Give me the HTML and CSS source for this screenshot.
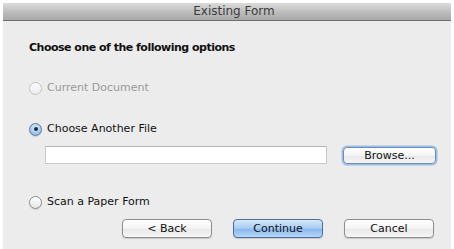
FILE: index.html
```html
<!DOCTYPE html>
<html lang="en">
<head>
  <meta charset="UTF-8">
  <title>Existing Form</title>
  <link rel="stylesheet" href="styles.css">
</head>
<body>
  <div class="dialog">
    <div class="titlebar">Existing Form</div>
    <div class="content">
      <div class="heading">Choose one of the following options</div>

      <label class="option disabled option-first">
        <span class="radio"></span>Current Document
      </label>

      <label class="option option-second">
        <span class="radio checked"></span>Choose Another File
      </label>

      <div class="filerow">
        <div class="filefield"></div>
        <button class="btn focus">Browse...</button>
      </div>

      <label class="option option-third">
        <span class="radio"></span>Scan a Paper Form
      </label>

      <div class="actions">
        <button class="btn">&lt; Back</button>
        <button class="btn primary">Continue</button>
        <button class="btn">Cancel</button>
      </div>
    </div>
  </div>
</body>
</html>
```

FILE: styles.css
```css
body {
  margin: 0;
  background: #fff;
  font-family: 'DejaVu Sans', sans-serif;
  font-size: 11px;
  color: #111;
}
.dialog {
  margin: 3px 3px 0 3px;
  height: 246px;
  background: #ececec;
}
.titlebar {
  height: 17px;
  line-height: 17px;
  text-align: center;
  font-size: 12px;
  color: #3c3c3c;
  background: linear-gradient(to bottom, #dcdcdc, #b9b9b9 60%, #a9a9a9);
  border-bottom: 1px solid #6f6f6f;
  padding-left: 14px;
}
.content {
  display: flex;
  flex-direction: column;
  padding: 0 0 0 26px;
}
.heading {
  margin-top: 20px;
  font-weight: bold;
  line-height: 14px;
  letter-spacing: -0.5px;
}
.option {
  display: flex;
  align-items: center;
  gap: 5px;
  height: 14px;
  line-height: 14px;
}
.option-first { margin-top: 26px; }
.option-second { margin-top: 27px; }
.option-third { margin-top: 31px; }
.option.disabled {
  color: #9a9a9a;
}
.radio {
  width: 11px;
  height: 11px;
  border: 1px solid #8c8c8c;
  border-radius: 50%;
  background: linear-gradient(to bottom, #ffffff, #e6e6e6);
  box-shadow: 0 1px 1px rgba(0,0,0,0.12);
  position: relative;
}
.option.disabled .radio {
  border-color: #c4c4c4;
  background: linear-gradient(to bottom, #fafafa, #eeeeee);
  box-shadow: none;
}
.radio.checked {
  border-color: #5a7aa6;
  background: radial-gradient(circle at 50% 35%, #e4f0fc, #98c0ea 70%, #7aa9dc);
}
.radio.checked::after {
  content: "";
  position: absolute;
  left: 3.5px;
  top: 3.5px;
  width: 4px;
  height: 4px;
  border-radius: 50%;
  background: #1d2a3a;
}
.filerow {
  display: flex;
  align-items: center;
  margin-top: 10px;
  margin-left: 16px;
  height: 18px;
}
.filefield {
  width: 280px;
  height: 16px;
  background: #fff;
  border: 1px solid #c9c9c9;
  border-top-color: #b4b4b4;
}
.btn {
  font-family: 'DejaVu Sans', sans-serif;
  font-size: 11px;
  color: #111;
  height: 17px;
  padding: 0;
  border: 1px solid #8e8e8e;
  border-radius: 4px;
  background: linear-gradient(to bottom, #ffffff, #f4f4f4 50%, #e8e8e8 51%, #f6f6f6);
  box-shadow: 0 1px 1px rgba(0,0,0,0.15);
}
.filerow .btn {
  width: 93px;
  margin-left: 16px;
}
.btn.focus {
  border-color: #6b8cba;
  box-shadow: 0 0 0 1.5px #9ebde3;
}
.btn.primary {
  border-color: #4f6e9c;
  background: linear-gradient(to bottom, #d6e8fb, #a6cbf3 50%, #84b5ec 51%, #b7d7f8);
}
.actions {
  display: flex;
  gap: 21px;
  margin-top: 10px;
  margin-left: 93px;
}
.actions .btn {
  width: 90px;
  height: 19px;
}
```
